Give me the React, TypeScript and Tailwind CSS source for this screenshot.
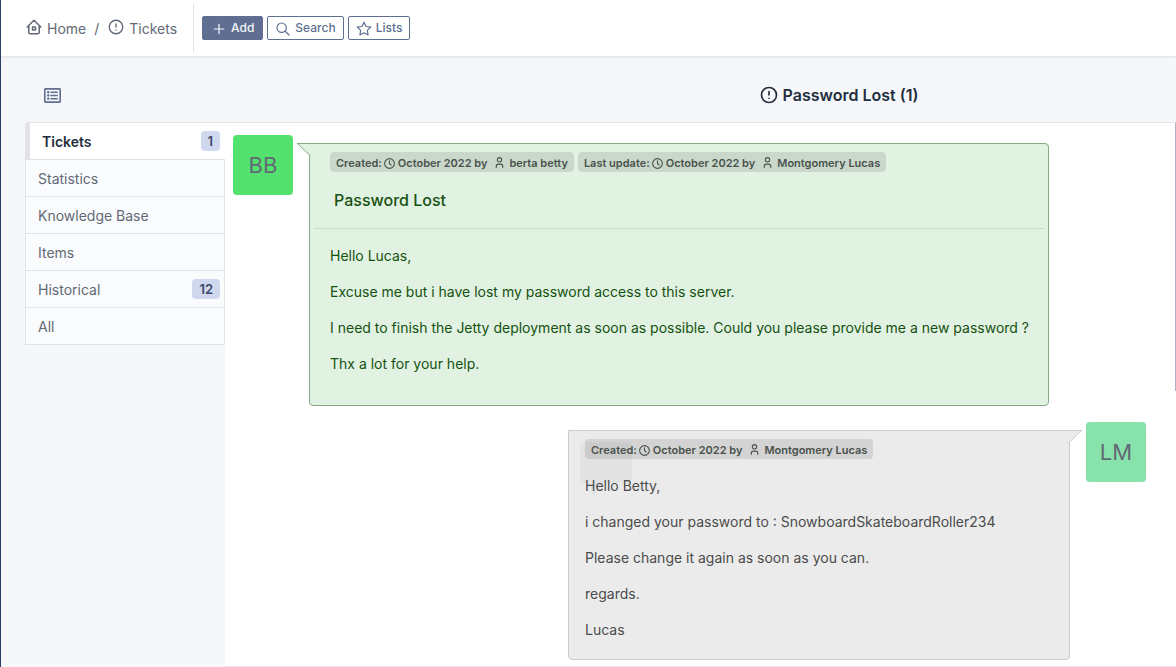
import type { ReactNode } from "react";
import { TbAlertCircle, TbClock, TbHome2, TbPlus, TbSearch, TbStar, TbUser } from "react-icons/tb";
import { FaRegListAlt } from "react-icons/fa";

const tabs = [
  { label: "Statistics" },
  { label: "Knowledge Base" },
  { label: "Items" },
  { label: "Historical", count: 12 },
  { label: "All" },
];

function Count({ value }: { value: number }) {
  return (
    <span className="rounded bg-[#d0d8f0] px-[7px] text-[13px] leading-5 font-semibold text-[#3a4766]">{value}</span>
  );
}

function Meta({ label, author }: { label: string; author: string }) {
  return (
    <span className="flex h-5 items-center rounded bg-black/10 px-[6px] pt-0.5 text-[11px] font-semibold whitespace-nowrap text-[#49524b]">
      {label}:
      <TbClock className="mr-[2px] ml-px size-[13px]" strokeWidth={2} />
      October 2022 by
      <TbUser className="mr-[3px] mb-0.5 ml-[6px] size-[13px]" strokeWidth={2} />
      {author}
    </span>
  );
}

function Avatar({ initials, color }: { initials: string; color: string }) {
  return (
    <div className={`flex size-[60px] shrink-0 items-center justify-center rounded text-[22px] text-[#626976] ${color}`}>
      {initials}
    </div>
  );
}

function Body({ lines }: { lines: ReactNode[] }) {
  return (
    <div className="flex flex-col gap-4">
      {lines.map((line, i) => (
        <p key={i}>{line}</p>
      ))}
    </div>
  );
}

export default function App() {
  return (
    <div className="flex h-screen flex-col overflow-hidden border-l border-[#2f3f64] bg-[#f5f7fb] font-['Inter',sans-serif] text-sm leading-5 text-[#626976]">
      <header className="z-10 flex h-14 shrink-0 items-center bg-white shadow-[0_1px_3px_rgba(35,46,60,0.12)]">
        <nav aria-label="Breadcrumb" className="flex items-center pt-0.5 pl-6">
          <a href="#home" className="flex items-center gap-1">
            <TbHome2 className="mb-[4px] size-[18px]" strokeWidth={2} />
            Home
          </a>
          <span className="px-2">/</span>
          <a href="#tickets" className="flex items-center gap-1">
            <TbAlertCircle className="mb-[4px] size-[18px]" strokeWidth={1.8} />
            Tickets
          </a>
        </nav>
        <div className="ml-4 flex h-12 items-center gap-1 border-l border-[#e0e2e6] pl-2 text-xs font-medium text-[#606f91]">
          <button className="flex h-6 items-center gap-1 rounded-xs border border-[#606f91] bg-[#606f91] px-2 text-[#f5f7fb]">
            <TbPlus className="mt-[2px] size-4" strokeWidth={1.8} />
            Add
          </button>
          <button className="flex h-6 items-center gap-1 rounded-xs border border-[#606f91] px-[7px]">
            <TbSearch className="mt-[2px] size-4" strokeWidth={1.8} />
            Search
          </button>
          <button className="flex h-6 items-center gap-1 rounded-xs border border-[#606f91] px-[7px]">
            <TbStar className="mt-[2px] size-4" strokeWidth={1.8} />
            Lists
          </button>
        </div>
      </header>

      <div className="flex h-[66px] shrink-0 items-center pt-3">
        <button aria-label="Toggle list" className="ml-[43px] text-[#606f91]">
          <FaRegListAlt className="size-[17px]" />
        </button>
        <h1 className="flex flex-1 items-center justify-center gap-1 pl-[440px] text-base font-semibold text-[#232e3c]">
          <TbAlertCircle className="size-5" strokeWidth={2} />
          Password Lost (1)
        </h1>
      </div>

      <div className="flex min-h-0 flex-1 items-start pl-6">
        <nav aria-label="Sections" className="flex w-[200px] shrink-0 flex-col rounded-tl border border-r-0 border-[#e1e3e7] bg-[#fafbfd]">
          <a href="#tickets" className="flex h-9 items-center justify-between border-l-4 border-[#e1e3e7] bg-white pr-[5px] pl-3 font-semibold text-[#232e3c]">
            <span className="pt-0.5">Tickets</span>
            <Count value={1} />
          </a>
          {tabs.map((tab) => (
            <a key={tab.label} href="#tab" className="flex h-[37px] items-center justify-between border-t border-r border-[#e1e3e7] pr-1 pl-3">
              <span className="pt-0.5">{tab.label}</span>
              {tab.count && <Count value={tab.count} />}
            </a>
          ))}
        </nav>

        <main className="relative h-[545px] min-w-0 flex-1 border-y border-[#e1e3e7] bg-white pr-[30px] pl-2">
          <div className="absolute top-0 right-0 h-[268px] w-px bg-[#aab2c2]" />

          <article className="mt-3 flex items-start gap-4">
            <Avatar initials="BB" color="bg-[#53e26d]" />
            <div className="relative mt-2 min-h-[263px] w-[740px] rounded rounded-tl-none border border-[#82ab86] bg-[#e1f1e2] px-1 text-[#155210]">
              <svg className="absolute -top-px -left-[13px]" width="14" height="14" viewBox="0 0 14 14" aria-hidden="true">
                <path d="M0 0H14V13H13Z" fill="#e1f1e2" />
                <path d="M0 .5H14M.5 .5L13.5 13" fill="none" stroke="#82ab86" />
              </svg>
              <div className="flex gap-1 px-4 pt-2">
                <Meta label="Created" author="berta betty" />
                <Meta label="Last update" author="Montgomery Lucas" />
              </div>
              <h2 className="mt-4 border-b border-[#c8dbc9] px-5 pb-4 text-base leading-6 font-medium">Password Lost</h2>
              <div className="pt-[17px] pr-2 pl-4">
                <Body
                  lines={[
                    "Hello Lucas,",
                    "Excuse me but i have lost my password access to this server.",
                    "I need to finish the Jetty deployment as soon as possible. Could you please provide me a new password ?",
                    "Thx a lot for your help.",
                  ]}
                />
              </div>
            </div>
          </article>

          <article className="mt-4 flex items-start justify-end gap-4">
            <div className="relative mt-2 min-h-[230px] w-[502px] rounded rounded-t-none border border-[#cbcbcb] bg-[#ebebeb] px-4 pt-2 text-[#4b4b4b]">
              <svg className="absolute -top-px -right-[13px]" width="14" height="14" viewBox="0 0 14 14" aria-hidden="true">
                <path d="M14 0H0V13H1Z" fill="#ebebeb" />
                <path d="M0 .5H14M13.5 .5L.5 13" fill="none" stroke="#cbcbcb" />
              </svg>
              <svg className="absolute top-[11px] left-[11px]" width="52" height="54" viewBox="0 0 52 54" aria-hidden="true">
                <path d="M5 0H47Q52 0 52 5V36Q52 41 47 41H24L16 52Q11 54 11 48V41H5Q0 41 0 36V5Q0 0 5 0Z" fill="#e2e2e2" />
              </svg>
              <div className="relative">
                <div className="flex pb-[17px]">
                  <Meta label="Created" author="Montgomery Lucas" />
                </div>
                <Body
                  lines={[
                    "Hello Betty,",
                    "i changed your password to : SnowboardSkateboardRoller234",
                    "Please change it again as soon as you can.",
                    "regards.",
                    "Lucas",
                  ]}
                />
              </div>
            </div>
            <Avatar initials="LM" color="bg-[#88e2ab]" />
          </article>
        </main>
      </div>
    </div>
  );
}
